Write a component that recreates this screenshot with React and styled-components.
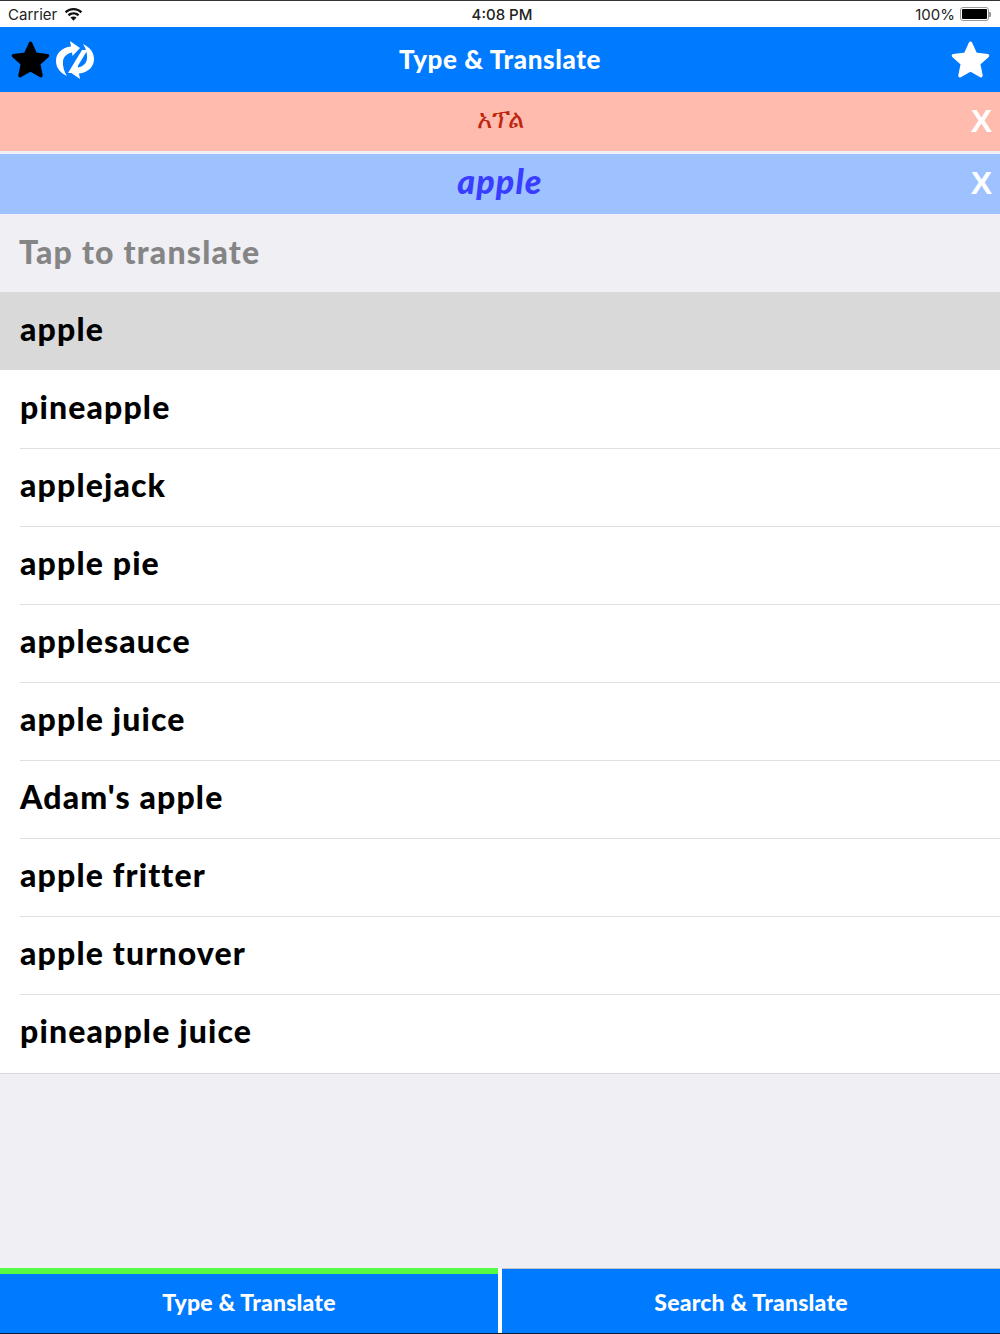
import React from 'react'
import styled, { createGlobalStyle } from 'styled-components'

const words = [
  'apple',
  'pineapple',
  'applejack',
  'apple pie',
  'applesauce',
  'apple juice',
  "Adam's apple",
  'apple fritter',
  'apple turnover',
  'pineapple juice'
]

const STAR_POINTS =
  '12,2.5 14.94,8.95 21.99,9.76 16.76,14.55 18.17,21.49 12,18 5.83,21.49 7.24,14.55 2.01,9.76 9.06,8.95'

const Star = ({ color }) => (
  <StarIcon viewBox="0 0 24 24" fill={color} stroke={color}>
    <polygon points={STAR_POINTS} strokeWidth="2" strokeLinejoin="round" />
  </StarIcon>
)

const SWAP_HALF = 'M16 6.500C7 7.500 1 13 1 21c0 7 4.500 12 11 15-3-4.500-4.500-10-4-15 .7-4.500 4-7.500 9-8.500l.5 3.500L25 8 15 1z'

const App = () => (
  <Page>
    <GlobalStyle />
    <StatusBar>
      <StatusLeft>
        Carrier
        <svg width="19" height="14" viewBox="0 0 19 14" fill="#111">
          <path d="M9.500 1C6 1 3 2.300.8 4.500l1.600 1.700C4.200 4.400 6.700 3.300 9.500 3.300s5.300 1.100 7.100 2.900l1.600-1.700C16 2.300 13 1 9.500 1z" />
          <path d="M9.500 5.200c-2.300 0-4.300.9-5.800 2.300l1.600 1.700c1.100-1 2.600-1.700 4.200-1.700s3.100.7 4.200 1.700l1.600-1.700c-1.500-1.400-3.500-2.300-5.800-2.300z" />
          <path d="M9.500 9.400c-1.200 0-2.200.4-3 1.200l3 3.100 3-3.100c-.8-.8-1.800-1.200-3-1.200z" />
        </svg>
      </StatusLeft>
      <StatusTime>4:08 PM</StatusTime>
      <StatusRight>
        100%
        <Battery>
          <BatteryFill />
        </Battery>
        <BatteryTip />
      </StatusRight>
    </StatusBar>

    <Header>
      <HeaderIcons>
        <Star color="#000" />
        <svg width="40" height="40" viewBox="0 0 40 40" fill="#fff">
          <path d="M27 10h5.500L18.500 33H13z" />
          <path d={SWAP_HALF} />
          <path d={SWAP_HALF} transform="rotate(180 20 20)" />
        </svg>
      </HeaderIcons>
      <HeaderTitle>Type &amp; Translate</HeaderTitle>
      <Star color="#fff" />
    </Header>

    <TranslationBar $bg="#ffbbad">
      <Amharic>አፕል</Amharic>
      <CloseMark>X</CloseMark>
    </TranslationBar>
    <TranslationBar $bg="#9dc2ff" $second>
      <English>apple</English>
      <CloseMark>X</CloseMark>
    </TranslationBar>

    <SectionTitle>Tap to translate</SectionTitle>

    <WordList>
      {words.map((word, index) => (
        <WordRow key={index} $selected={index === 0}>
          <WordText $divider={index > 1}>{word}</WordText>
        </WordRow>
      ))}
    </WordList>

    <Spacer />

    <TabBar>
      <Tab $active>Type &amp; Translate</Tab>
      <Tab>Search &amp; Translate</Tab>
    </TabBar>
  </Page>
)

const GlobalStyle = createGlobalStyle`
  html, body {
    margin: 0;
    padding: 0;
    background: #efeff4;
  }
`

const Page = styled.div`
  width: 1000px;
  height: 1334px;
  display: flex;
  flex-direction: column;
  overflow: hidden;
  box-sizing: border-box;
  border-top: 1px solid #333;
  border-bottom: 1px solid #0a1c3a;
  background: #efeff4;
  font-family: Lato, "Open Sans", sans-serif;
`

const StatusBar = styled.div`
  height: 26px;
  flex: none;
  display: grid;
  grid-template-columns: 1fr auto 1fr;
  align-items: center;
  padding: 0 9px 0 8px;
  background: #fff;
  color: #222;
  font-family: Inter, "Liberation Sans", sans-serif;
  font-size: 15px;
`

const StatusLeft = styled.div`
  display: flex;
  align-items: center;
  gap: 7px;
`

const StatusTime = styled.div`
  font-weight: 500;
  padding-left: 5px;
`

const StatusRight = styled.div`
  display: flex;
  align-items: center;
  justify-content: flex-end;
`

const Battery = styled.div`
  width: 29px;
  height: 14px;
  margin-left: 5px;
  padding: 1px;
  box-sizing: border-box;
  border: 1px solid #999;
  border-radius: 3px;
`

const BatteryFill = styled.div`
  width: 100%;
  height: 100%;
  background: #000;
  border-radius: 1px;
`

const BatteryTip = styled.div`
  width: 2px;
  height: 5px;
  background: #999;
  border-radius: 0 1px 1px 0;
`

const Header = styled.div`
  height: 65px;
  flex: none;
  display: flex;
  align-items: center;
  justify-content: space-between;
  padding: 0 9px 0 10px;
  background: #007aff;
  position: relative;
`

const HeaderIcons = styled.div`
  display: flex;
  align-items: center;
  gap: 4px;
`

const StarIcon = styled.svg`
  width: 41px;
  height: 41px;
  display: block;
`

const HeaderTitle = styled.div`
  position: absolute;
  left: 0;
  right: 0;
  padding-bottom: 2px;
  text-align: center;
  color: #fff;
  font-size: 26px;
  font-weight: 900;
  letter-spacing: 0.6px;
`

const TranslationBar = styled.div`
  height: ${p => (p.$second ? '60px' : '59px')};
  flex: none;
  margin-top: ${p => (p.$second ? '3px' : '0')};
  display: flex;
  align-items: center;
  justify-content: center;
  background: ${p => p.$bg};
  position: relative;
`

const Amharic = styled.div`
  color: #c0260f;
  font-family: "Noto Sans", "DejaVu Sans", sans-serif;
  font-size: 26px;
  padding-bottom: 7px;
`

const English = styled.div`
  color: #3a3dff;
  font-size: 34px;
  font-weight: 900;
  font-style: italic;
  letter-spacing: 1.1px;
  padding-bottom: 8px;
`

const CloseMark = styled.div`
  position: absolute;
  right: 8px;
  top: 50%;
  transform: translateY(-50%);
  padding-bottom: 2px;
  color: #fff;
  font-family: "Liberation Sans", sans-serif;
  font-size: 32px;
  font-weight: 700;
`

const SectionTitle = styled.div`
  height: 78px;
  flex: none;
  box-sizing: border-box;
  display: flex;
  align-items: center;
  padding: 0 0 3px 19px;
  color: #858585;
  font-size: 32px;
  font-weight: 900;
  letter-spacing: 1.2px;
`

const WordList = styled.div`
  flex: none;
  padding-bottom: 1px;
  background: #fff;
  border-bottom: 1px solid #d9d9de;
`

const WordRow = styled.div`
  height: 78px;
  padding-left: 20px;
  background: ${p => (p.$selected ? '#d9d9d9' : '#fff')};
`

const WordText = styled.div`
  height: 78px;
  box-sizing: border-box;
  display: flex;
  align-items: center;
  padding-bottom: 7px;
  color: #000;
  font-size: 32px;
  font-weight: 900;
  letter-spacing: 1.15px;
  border-top: 1px solid ${p => (p.$divider ? '#e0e0e0' : 'transparent')};
`

const Spacer = styled.div`
  flex: 1;
`

const TabBar = styled.div`
  height: 65px;
  flex: none;
  display: grid;
  grid-template-columns: 498px 498px;
  justify-content: space-between;
  background: #fff;
`

const Tab = styled.div`
  display: flex;
  align-items: center;
  justify-content: center;
  box-sizing: border-box;
  background: #007aff;
  color: #fff;
  font-size: 23px;
  font-weight: 900;
  letter-spacing: 0.2px;
  border-top: ${p => (p.$active ? '6px solid #55fb45' : '1px solid #c4c4c8')};
  padding: ${p => (p.$active ? '0 0 3px' : '2px 0 0')};
`

export default App
